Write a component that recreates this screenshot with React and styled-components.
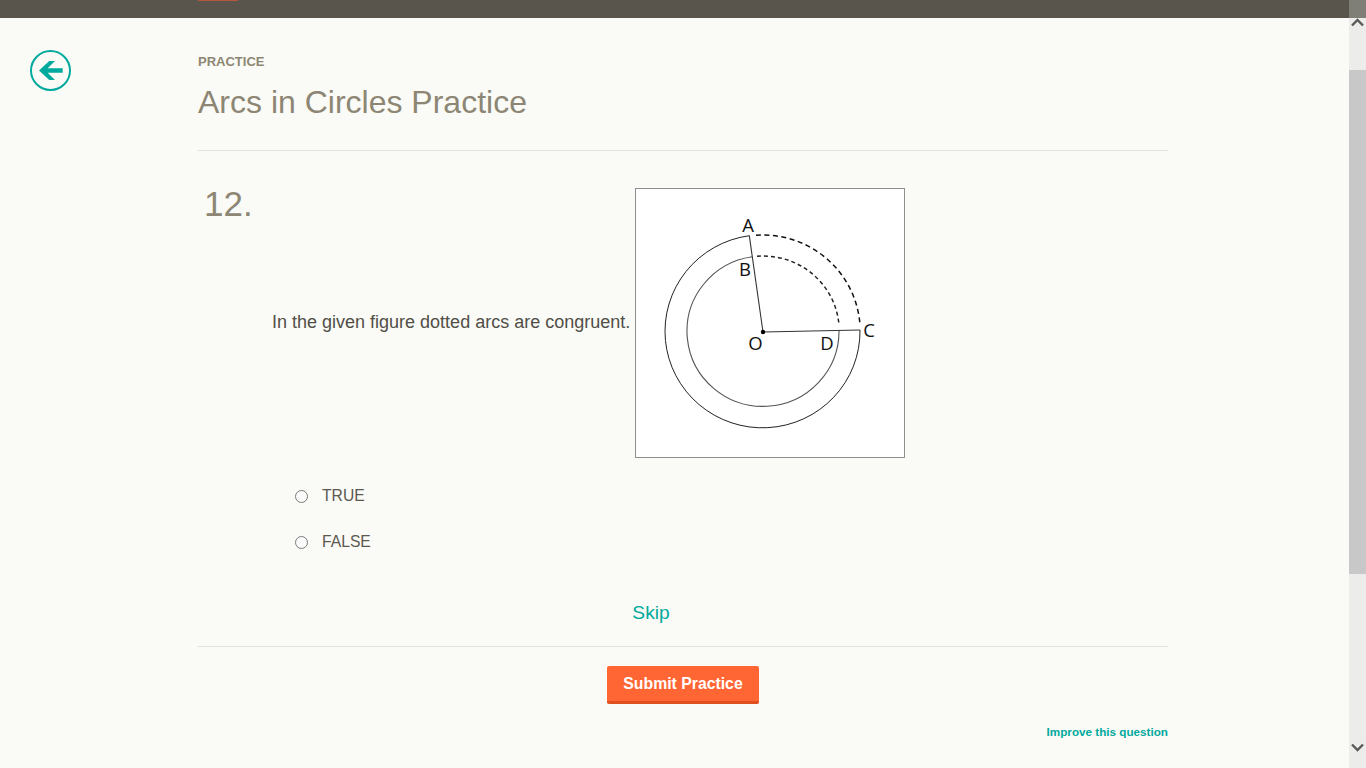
import React from "react";
import styled, { createGlobalStyle } from "styled-components";

const GlobalStyle = createGlobalStyle`
  html, body {
    margin: 0;
    padding: 0;
    height: 100%;
    overflow: hidden;
    background: #fafbf6;
    font-family: "Liberation Sans", Arial, sans-serif;
  }
`;

const Page = styled.div`
  display: flex;
  width: 1366px;
  height: 768px;
  overflow: hidden;
  background: #fafbf6;
`;

const Main = styled.div`
  flex: 1;
  min-width: 0;
  display: flex;
  flex-direction: column;
`;

const TopBar = styled.div`
  height: 18px;
  flex: none;
  background: #59554d;
  padding-left: 198px;
`;

const TopTab = styled.div`
  width: 40px;
  height: 1px;
  background: #b5573a;
`;

const Body = styled.div`
  display: flex;
  padding: 32px 0 0 30px;
`;

const BackLink = styled.a`
  display: block;
  flex: none;
  width: 41px;
  height: 41px;
  margin-right: 127px;
  cursor: pointer;
`;

const Content = styled.div`
  width: 970px;
`;

const Header = styled.div`
  padding-top: 4px;
  height: 96px;
  border-bottom: 1px solid #e2e2dc;
`;

const Eyebrow = styled.div`
  font-size: 13px;
  line-height: 16px;
  font-weight: 700;
  color: #8d8674;
`;

const Title = styled.h1`
  margin: 13px 0 0;
  font-size: 32px;
  line-height: 38px;
  font-weight: 400;
  color: #8d8674;
`;

const Question = styled.div`
  display: flex;
  padding-top: 37px;
`;

const Number = styled.div`
  flex: none;
  width: 68px;
  padding-left: 6px;
  font-size: 35px;
  line-height: 32px;
  color: #8d8674;
`;

const Prompt = styled.div`
  display: flex;
  align-items: center;
  gap: 5px;
  font-size: 18px;
  color: #514e47;
`;

const PromptText = styled.span`
  margin-bottom: 2px;
`;

const FigureFrame = styled.div`
  width: 268px;
  height: 268px;
  border: 1px solid #8f8f8f;
  background: #ffffff;
`;

const Options = styled.div`
  display: flex;
  flex-direction: column;
  gap: 28px;
  padding: 29px 0 0 97px;
`;

const Option = styled.label`
  display: flex;
  align-items: center;
  height: 18px;
  font-size: 15.7px;
  color: #5b5850;
`;

const Radio = styled.span`
  box-sizing: border-box;
  width: 13px;
  height: 13px;
  margin-right: 14px;
  border: 1px solid #7a7a7a;
  border-radius: 50%;
  background: #fbfbfb;
`;

const SkipRow = styled.div`
  display: flex;
  justify-content: center;
  padding: 51px 64px 0 0;
  height: 44px;
  border-bottom: 1px solid #e2e2dc;
`;

const Skip = styled.a`
  font-size: 19.2px;
  line-height: 21px;
  height: 21px;
  color: #00a99d;
  cursor: pointer;
`;

const ButtonRow = styled.div`
  display: flex;
  justify-content: center;
  padding-top: 19px;
`;

const SubmitButton = styled.button`
  box-sizing: border-box;
  width: 152px;
  height: 38px;
  padding: 0;
  border: 0;
  border-bottom: 3px solid #e0501f;
  border-radius: 2px;
  background: #ff6633;
  color: #ffffff;
  font-family: inherit;
  font-size: 15.8px;
  font-weight: 700;
  cursor: pointer;
`;

const ImproveRow = styled.div`
  display: flex;
  justify-content: flex-end;
  padding-top: 21px;
`;

const Improve = styled.a`
  font-size: 11.7px;
  line-height: 14px;
  font-weight: 700;
  color: #00a99d;
  cursor: pointer;
`;

const Scrollbar = styled.div`
  flex: none;
  width: 17px;
  height: 768px;
  display: flex;
  flex-direction: column;
  background: #ecedea;
`;

const ScrollCap = styled.div`
  height: 18px;
  flex: none;
  background: #7f7e77;
`;

const ScrollButton = styled.div`
  flex: none;
  height: ${(p) => p.$h}px;
  display: flex;
  justify-content: center;
  align-items: ${(p) => (p.$down ? "flex-end" : "flex-start")};
  padding-bottom: ${(p) => (p.$down ? "16px" : "0")};
  box-sizing: border-box;
`;

const ScrollThumb = styled.div`
  flex: none;
  height: 504px;
  background: #c8c8c8;
`;

const FigureLabel = styled.text`
  font-family: "Open Sans", "DejaVu Sans", sans-serif;
  font-size: 18.5px;
  fill: #111111;
  text-anchor: middle;
`;

const BackIcon = () => (
  <svg width="41" height="41" viewBox="0 0 41 41">
    <circle cx="20.5" cy="20.5" r="19.5" fill="none" stroke="#00a99d" strokeWidth="2" />
    <path d="M32.700 18.300H17.700L25 11H19.300L9 20.500L19.300 30H25L17.700 22.700H32.700Z" fill="#00a99d" />
  </svg>
);

const ArcFigure = () => (
  <svg width="268" height="268" viewBox="1 1 268 268">
    <path d="M114.300 47.700A97.500 96.500 0 1 0 225 142" fill="none" stroke="#222" strokeWidth="1" />
    <path d="M121 47.200A97.500 96.500 0 0 1 225 137" fill="none" stroke="#111" strokeWidth="1.500" strokeDasharray="5 3.500" />
    <path d="M117.300 68.700A76 75.200 0 1 0 204 142" fill="none" stroke="#555" strokeWidth="1.100" />
    <path d="M122 68.300A76 75.200 0 0 1 204 137" fill="none" stroke="#222" strokeWidth="1.500" strokeDasharray="4 3" />
    <path d="M114.300 47.700L128 144L225 142" fill="none" stroke="#333" strokeWidth="1.100" />
    <circle cx="128" cy="144" r="2.200" fill="#000" />
    <FigureLabel x="113" y="44">A</FigureLabel>
    <FigureLabel x="110" y="88">B</FigureLabel>
    <FigureLabel x="234" y="149">C</FigureLabel>
    <FigureLabel x="192" y="162">D</FigureLabel>
    <FigureLabel x="120.500" y="162">O</FigureLabel>
  </svg>
);

const Chevron = ({ down }) => (
  <svg width="13" height="9" viewBox="0 0 13 9">
    <path d={down ? "M1 1.500l5.500 5.500 5.500-5.500" : "M1 7.500l5.500-5.500 5.500 5.500"} fill="none" stroke="#5a5a5a" strokeWidth="2.400" />
  </svg>
);

export default function App() {
  return (
    <Page>
      <GlobalStyle />
      <Main>
        <TopBar>
          <TopTab />
        </TopBar>
        <Body>
          <BackLink>
            <BackIcon />
          </BackLink>
          <Content>
            <Header>
              <Eyebrow>PRACTICE</Eyebrow>
              <Title>Arcs in Circles Practice</Title>
            </Header>
            <Question>
              <Number>12.</Number>
              <Prompt>
                <PromptText>In the given figure dotted arcs are congruent.</PromptText>
                <FigureFrame>
                  <ArcFigure />
                </FigureFrame>
              </Prompt>
            </Question>
            <Options>
              <Option>
                <Radio />
                TRUE
              </Option>
              <Option>
                <Radio />
                FALSE
              </Option>
            </Options>
            <SkipRow>
              <Skip>Skip</Skip>
            </SkipRow>
            <ButtonRow>
              <SubmitButton>Submit Practice</SubmitButton>
            </ButtonRow>
            <ImproveRow>
              <Improve>Improve this question</Improve>
            </ImproveRow>
          </Content>
        </Body>
      </Main>
      <Scrollbar>
        <ScrollCap />
        <ScrollButton $h={52}>
          <Chevron />
        </ScrollButton>
        <ScrollThumb />
        <ScrollButton $h={194} $down>
          <Chevron down />
        </ScrollButton>
      </Scrollbar>
    </Page>
  );
}
